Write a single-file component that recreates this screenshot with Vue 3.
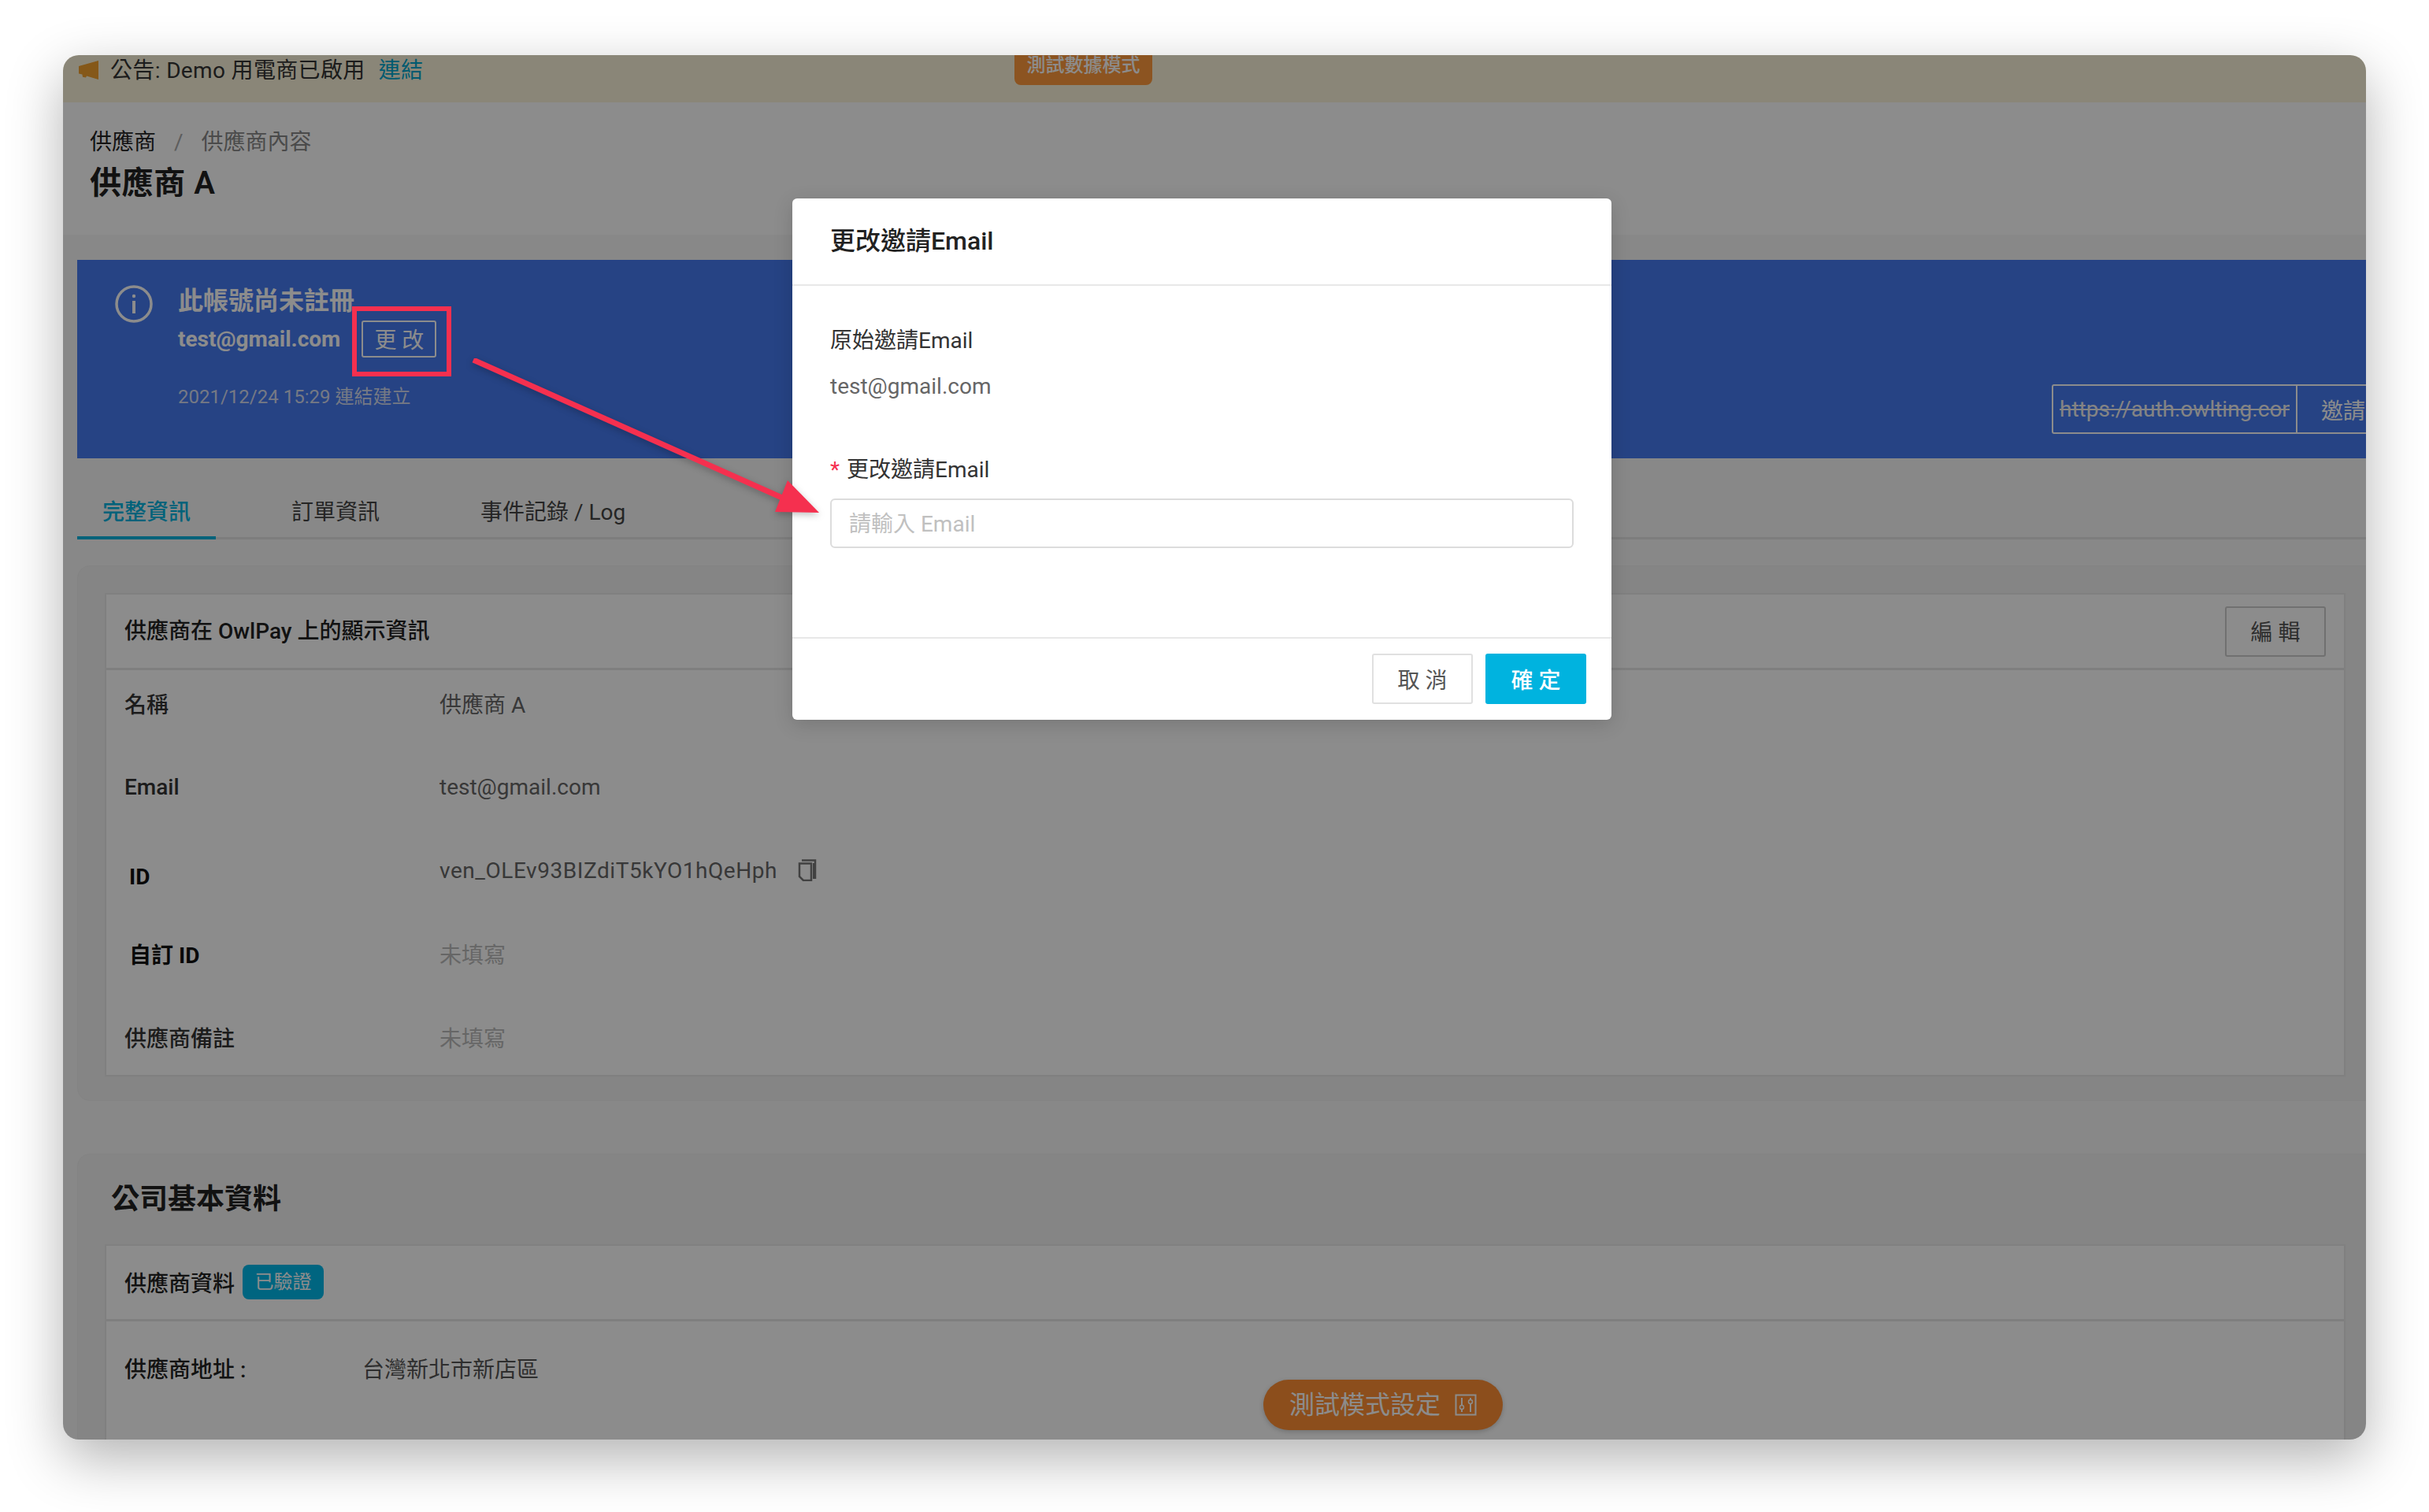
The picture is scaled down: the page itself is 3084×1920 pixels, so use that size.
<template>
  <div class="stage">
    <div class="window">
      <div class="notice">
        <svg class="horn" viewBox="0 0 26 26" width="26" height="26"><path d="M25 1v24L10 20.500l-1 2-4-.7-.6-3.300L0 17.500V8z" fill="#f2a02e" /></svg>
        <span>公告: Demo 用電商已啟用</span>
        <a class="notice-link">連結</a>
        <div class="test-flag">測試數據模式</div>
      </div>

      <header class="page-head">
        <div class="crumbs">
          <span class="crumb-root">供應商</span>
          <span class="crumb-sep">/</span>
          <span>供應商內容</span>
        </div>
        <h1>供應商 A</h1>
      </header>

      <main class="content">
        <section class="banner">
          <svg class="info" viewBox="0 0 48 48" width="48" height="48">
            <circle cx="24" cy="24" r="22" fill="none" stroke="#fff" stroke-width="3.500" />
            <path d="M24 20v16" stroke="#fff" stroke-width="4" />
            <circle cx="24" cy="14" r="2.200" fill="#fff" />
          </svg>
          <div class="banner-text">
            <div class="banner-title">此帳號尚未註冊</div>
            <div class="banner-mail">
              <b>test@gmail.com</b>
              <button class="ghost">更 改</button>
            </div>
            <div class="banner-date">2021/12/24 15:29 連結建立</div>
          </div>
          <div class="invite">
            <div class="invite-url"><s>https://auth.owlting.com/invite</s></div>
            <button class="invite-btn">邀請</button>
          </div>
        </section>

        <nav class="tabs">
          <a v-for="(t, i) in tabs" :key="t" :class="['tab', { on: i == 0 }]">{{ t }}</a>
        </nav>

        <section class="block first">
          <div class="card">
            <div class="card-head">
              <b>供應商在 OwlPay 上的顯示資訊</b>
              <button class="edit">編 輯</button>
            </div>
            <div class="rows">
              <div v-for="r in rows" :key="r.label" :class="['row', r.cls]">
                <span class="row-label">{{ r.label }}</span>
                <span :class="['row-value', { empty: r.empty }]">{{ r.value }}</span>
                <svg v-if="r.copy" class="copy" viewBox="0 0 24 28" width="24" height="28">
                  <path d="M5 1.500h17V25" fill="none" stroke="#777" stroke-width="2.500" />
                  <path d="M19 5h3v20h-3z" fill="#777" />
                  <path d="M2 5.500h15V27H7l-5-5z" fill="none" stroke="#777" stroke-width="2.500" />
                </svg>
              </div>
            </div>
          </div>
        </section>

        <section class="block second">
          <h2>公司基本資料</h2>
          <div class="card tall">
            <div class="card-head short">
              <b>供應商資料</b>
              <span class="badge">已驗證</span>
            </div>
            <div class="addr">
              <b>供應商地址 :</b>
              <span>台灣新北市新店區</span>
            </div>
          </div>
        </section>
      </main>

      <button class="test-pill">
        <span class="pill-text">測試模式設定</span>
        <svg viewBox="0 0 28 28" width="28" height="28">
          <path d="M1.500 1.500h25v25h-25zM9 5v18M20 5v18" fill="none" stroke="#fff" stroke-width="2" />
          <circle cx="9" cy="17" r="2.500" fill="#ff8f33" stroke="#fff" stroke-width="1.500" />
          <circle cx="20" cy="10" r="2.500" fill="#ff8f33" stroke="#fff" stroke-width="1.500" />
        </svg>
      </button>

      <div class="mask"></div>

      <div class="modal">
        <div class="modal-head">更改邀請Email</div>
        <div class="modal-body">
          <div class="field-label">原始邀請Email</div>
          <div class="field-value">test@gmail.com</div>
          <div class="field-label req"><i>*</i>更改邀請Email</div>
          <input class="field-input" placeholder="請輸入 Email" />
        </div>
        <div class="modal-foot">
          <button class="btn">取 消</button>
          <button class="btn primary">確 定</button>
        </div>
      </div>

      <div class="mark"></div>
      <svg class="arrow" viewBox="0 0 460 220" width="460" height="220">
        <path d="M2 2L423 190" stroke="#f5304f" stroke-width="7" />
        <path d="M441 196L401 155 385 195z" fill="#f5304f" />
      </svg>
    </div>
  </div>
</template>

<script setup>
const tabs = ['完整資訊', '訂單資訊', '事件記錄 / Log']

const rows = [
  { label: '名稱', value: '供應商 A' },
  { label: 'Email', value: 'test@gmail.com' },
  { label: 'ID', value: 'ven_OLEv93BIZdiT5kYO1hQeHph', copy: true, cls: 'id' },
  { label: '自訂 ID', value: '未填寫', empty: true, cls: 'custom' },
  { label: '供應商備註', value: '未填寫', empty: true },
]
</script>

<style>
html,
body {
  margin: 0;
  background: #fff;
}
</style>

<style scoped>
.stage {
  width: 3084px;
  height: 1920px;
  padding: 70px 80px 92px;
  box-sizing: border-box;
  font-family: Roboto, 'Noto Sans CJK TC', sans-serif;
  font-size: 28px;
  color: #333;
}
.window {
  position: relative;
  width: 2924px;
  height: 1758px;
  border-radius: 20px;
  overflow: hidden;
  background: #f8f8f8;
  box-shadow: 0 24px 70px rgba(0, 0, 0, 0.3);
}
button {
  font-family: inherit;
  background: none;
  cursor: pointer;
}
.notice {
  position: relative;
  height: 60px;
  background: #fbf5da;
  display: flex;
  align-items: flex-start;
  padding: 6px 0 0 20px;
  box-sizing: border-box;
  line-height: 28px;
  letter-spacing: 0.35px;
}
.horn {
  margin: 0 14px 0 0;
}
.notice-link {
  margin-left: 17px;
  color: #00a5cc;
}
.test-flag {
  position: absolute;
  left: 1208px;
  top: 0;
  width: 175px;
  height: 38px;
  border-radius: 0 0 8px 8px;
  background: #ff9a3c;
  color: #fff;
  font-size: 24px;
  font-weight: 500;
  line-height: 26px;
  letter-spacing: 0;
  text-align: center;
  overflow: hidden;
}
.page-head {
  height: 168px;
  background: #fff;
  padding: 34px 0 0 34px;
  box-sizing: border-box;
}
.crumbs {
  display: flex;
  line-height: 34px;
  color: #888;
}
.crumb-root {
  color: #222;
}
.crumb-sep {
  margin: 0 23px;
  color: #aaa;
}
h1 {
  margin: 10px 0 0;
  font-size: 40px;
  line-height: 50px;
  font-weight: 600;
  letter-spacing: 0.6px;
  color: #222;
}
.content {
  padding: 32px 0 0 18px;
}
.banner {
  position: relative;
  height: 252px;
  background: #457af0;
  color: #fff;
  display: flex;
  padding: 30px 0 0 48px;
  box-sizing: border-box;
}
.info {
  margin-top: 2px;
}
.banner-text {
  margin-left: 32px;
}
.banner-title {
  font-size: 32px;
  font-weight: 700;
  line-height: 44px;
}
.banner-mail {
  display: flex;
  align-items: center;
  height: 48px;
  margin-top: 2px;
}
.ghost {
  width: 95px;
  height: 47px;
  margin-left: 27px;
  border: 2px solid #fff;
  border-radius: 3px;
  color: #fff;
  font-size: 28px;
  padding: 0;
}
.banner-date {
  margin-top: 33px;
  font-size: 24px;
  line-height: 34px;
  color: #d6ddf0;
}
.invite {
  position: absolute;
  left: 2507px;
  top: 158px;
  display: flex;
  height: 63px;
}
.invite-url {
  width: 312px;
  border: 2px solid #fff;
  border-radius: 3px 0 0 3px;
  box-sizing: border-box;
  padding: 0 8px;
  line-height: 59px;
  white-space: nowrap;
  font-size: 28px;
  color: #f0f0f0;
}
.invite-url s {
  display: block;
  overflow: hidden;
}
.invite-btn {
  width: 120px;
  border: 2px solid #fff;
  border-left: 0;
  box-sizing: border-box;
  text-align: left;
  padding: 0 0 0 30px;
  font-size: 28px;
  color: #fff;
}
.tabs {
  display: flex;
  height: 103px;
  border-bottom: 3px solid #e4e4e4;
  box-sizing: border-box;
}
.tab {
  padding: 49px 32px 0;
  margin-right: 64px;
  line-height: 40px;
  height: 100px;
  box-sizing: border-box;
  color: #444;
}
.tab.on {
  color: #00b3df;
  font-weight: 500;
  border-bottom: 4px solid #00b3df;
  height: 103px;
}
.block {
  background: #f3f3f3;
  border: 1px solid #eee;
  border-radius: 16px;
  padding: 34px 34px;
  margin-right: -30px;
  box-sizing: border-box;
}
.block.first {
  margin-top: 33px;
  height: 680px;
}
.block.second {
  margin-top: 67px;
  padding-top: 32px;
  height: 600px;
}
h2 {
  margin: 0 0 32px 8px;
  font-size: 36px;
  line-height: 50px;
  font-weight: 700;
  color: #222;
}
.card {
  width: 2845px;
  background: #fff;
  border: 2px solid #eaeaea;
  box-sizing: border-box;
}
.card.tall {
  height: 400px;
}
.card-head {
  height: 96px;
  border-bottom: 3px solid #e8e8e8;
  display: flex;
  align-items: center;
  padding: 0 23px;
  color: #222;
  box-sizing: border-box;
}
.card-head b {
  font-weight: 500;
  margin-bottom: 5px;
}
.edit {
  margin-left: auto;
  width: 128px;
  height: 64px;
  border: 2px solid #ccc;
  border-radius: 3px;
  color: #555;
  font-size: 28px;
  padding: 0 0 2px;
}
.rows {
  margin: -11px 0 -5px;
}
.row {
  display: flex;
  align-items: center;
  height: 106px;
  padding-left: 23px;
}
.row-label {
  width: 400px;
  font-weight: 500;
  color: #333;
}
.row-value {
  color: #666;
}
.row-value.empty {
  color: #bbb;
}
.row.id .row-value {
  letter-spacing: 0.55px;
}
.row.id .row-label,
.row.custom .row-label {
  margin-left: 6px;
  width: 394px;
  font-weight: 700;
  color: #111;
}
.row.id .row-label {
  padding-top: 16px;
}
.copy {
  margin-left: 26px;
}
.card-head.short {
  gap: 10px;
}
.card-head.short b {
  margin-bottom: 2px;
}
.badge {
  width: 103px;
  height: 44px;
  margin-bottom: 2px;
  background: #00b8e9;
  border-radius: 8px;
  color: #fff;
  font-size: 24px;
  line-height: 44px;
  text-align: center;
}
.addr {
  display: flex;
  padding: 43px 23px;
  line-height: 38px;
}
.addr b {
  width: 302px;
  font-weight: 500;
  color: #222;
}
.addr span {
  color: #555;
}
.test-pill {
  position: absolute;
  left: 1524px;
  top: 1682px;
  width: 304px;
  height: 64px;
  border: 0;
  border-radius: 32px;
  background: #ff8f33;
  color: #fff;
  font-size: 32px;
  display: flex;
  align-items: center;
  justify-content: center;
  gap: 18px;
  padding: 0;
  box-shadow: 0 2px 6px rgba(0, 0, 0, 0.2);
}
.pill-text {
  margin-top: -6px;
}
.mask {
  position: absolute;
  inset: 0;
  background: rgba(0, 0, 0, 0.45);
}
.modal {
  position: absolute;
  left: 926px;
  top: 182px;
  width: 1040px;
  height: 662px;
  background: #fff;
  border-radius: 6px;
  box-shadow: 0 6px 24px rgba(0, 0, 0, 0.15);
  display: flex;
  flex-direction: column;
}
.modal-head {
  height: 109px;
  flex: none;
  border-bottom: 2px solid #e8e8e8;
  padding: 0 48px;
  line-height: 109px;
  font-size: 32px;
  font-weight: 500;
  color: #222;
}
.modal-body {
  flex: 1;
  padding: 50px 48px 0;
}
.field-label {
  line-height: 40px;
  color: #333;
}
.field-value {
  margin-top: 18px;
  line-height: 40px;
  color: #666;
}
.field-label.req {
  margin-top: 66px;
}
.req i {
  font-style: normal;
  color: #f5304f;
  margin-right: 9px;
}
.field-input {
  display: block;
  width: 944px;
  height: 63px;
  margin-top: 16px;
  padding: 2px 22px 0;
  border: 2px solid #dcdcdc;
  border-radius: 6px;
  box-sizing: border-box;
  font-family: inherit;
  font-size: 28px;
  outline: 0;
}
.field-input::placeholder {
  color: #c0c0c0;
}
.modal-foot {
  height: 105px;
  flex: none;
  border-top: 2px solid #e8e8e8;
  box-sizing: border-box;
  display: flex;
  justify-content: flex-end;
  align-items: flex-start;
  gap: 16px;
  padding: 19px 32px 0;
}
.btn {
  width: 128px;
  height: 64px;
  border: 2px solid #e0e0e0;
  border-radius: 3px;
  font-size: 28px;
  color: #555;
  background: #fff;
  padding: 0;
}
.btn.primary {
  border: 0;
  background: #00b3df;
  color: #fff;
  font-weight: 500;
}
.mark {
  position: absolute;
  left: 367px;
  top: 319px;
  width: 126px;
  height: 89px;
  border: 6px solid #f5304f;
  box-sizing: border-box;
}
.arrow {
  position: absolute;
  left: 519px;
  top: 385px;
  filter: drop-shadow(0 3px 4px rgba(0, 0, 0, 0.25));
}
</style>
